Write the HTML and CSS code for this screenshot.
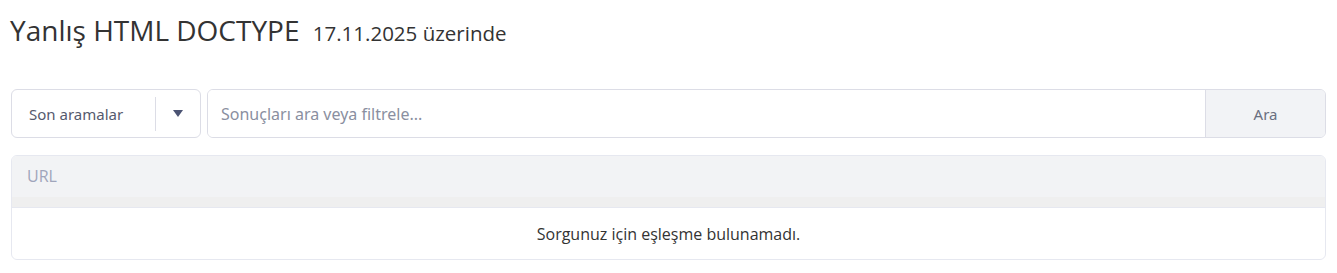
FILE: index.html
```html
<!DOCTYPE html>
<html lang="tr">
<head>
    <meta charset="UTF-8">
    <link rel="stylesheet" href="styles.css">
</head>
<body>
    <h1 class="page-title">Yanlış HTML DOCTYPE <small>17.11.2025 üzerinde</small></h1>

    <div class="search-row">
        <div class="recent">
            <span class="recent-label">Son aramalar</span>
            <span class="recent-toggle">
                <svg width="10" height="7" viewBox="0 0 10 7"><path d="M0 0h10L5 7z" fill="#4b5373"/></svg>
            </span>
        </div>
        <div class="search-group">
            <input type="text" class="search-input" placeholder="Sonuçları ara veya filtrele...">
            <button class="search-btn">Ara</button>
        </div>
    </div>

    <div class="results">
        <div class="results-head">URL</div>
        <div class="results-band"></div>
        <div class="results-empty">Sorgunuz için eşleşme bulunamadı.</div>
    </div>
</body>
</html>
```

FILE: styles.css
```css
body {
    margin: 0;
    padding: 0 11px;
    background: #fff;
    font-family: "Open Sans", sans-serif;
    color: #333;
}
.page-title {
    margin: 0 0 0 -1px;
    padding: 11px 0 0 0;
    font-size: 28px;
    font-weight: normal;
    line-height: 39px;
    color: #333;
}
.page-title small {
    font-size: 20.5px;
    margin-left: 6px;
}
.search-row {
    display: flex;
    gap: 6px;
    margin-top: 36px;
    height: 49px;
}
.recent {
    width: 190px;
    box-sizing: border-box;
    display: flex;
    align-items: center;
    border: 1px solid #dcdde6;
    border-radius: 6px;
    font-family: "Noto Sans", sans-serif;
    font-size: 15px;
    color: #555a6e;
}
.recent-label {
    flex: 1;
    padding-left: 17px;
}
.recent-toggle {
    width: 44px;
    height: 34px;
    border-left: 1px solid #dcdde6;
    display: flex;
    align-items: center;
    justify-content: center;
}
.search-group {
    flex: 1;
    display: flex;
    border: 1px solid #dcdde6;
    border-radius: 6px;
    overflow: hidden;
}
.search-input {
    flex: 1;
    border: none;
    outline: none;
    padding: 0 13px;
    font-family: "Noto Sans", sans-serif;
    font-size: 16px;
    color: #333;
}
.search-input::placeholder {
    color: #8a8fa0;
}
.search-btn {
    width: 120px;
    border: none;
    border-left: 1px solid #dcdde6;
    background: #f2f3f6;
    font-family: "Noto Sans", sans-serif;
    font-size: 15px;
    color: #6a6f80;
}
.results {
    margin-top: 17px;
    border: 1px solid #e6e8f0;
    border-radius: 6px;
    overflow: hidden;
}
.results-head {
    background: #f2f3f5;
    height: 41px;
    line-height: 40px;
    padding-left: 15px;
    font-size: 16px;
    color: #a0a5bb;
}
.results-band {
    height: 10px;
    background: #efefef;
    border-bottom: 1px solid #e6e8f0;
}
.results-empty {
    height: 51px;
    line-height: 52px;
    text-align: center;
    font-size: 16px;
    color: #333;
}
```
